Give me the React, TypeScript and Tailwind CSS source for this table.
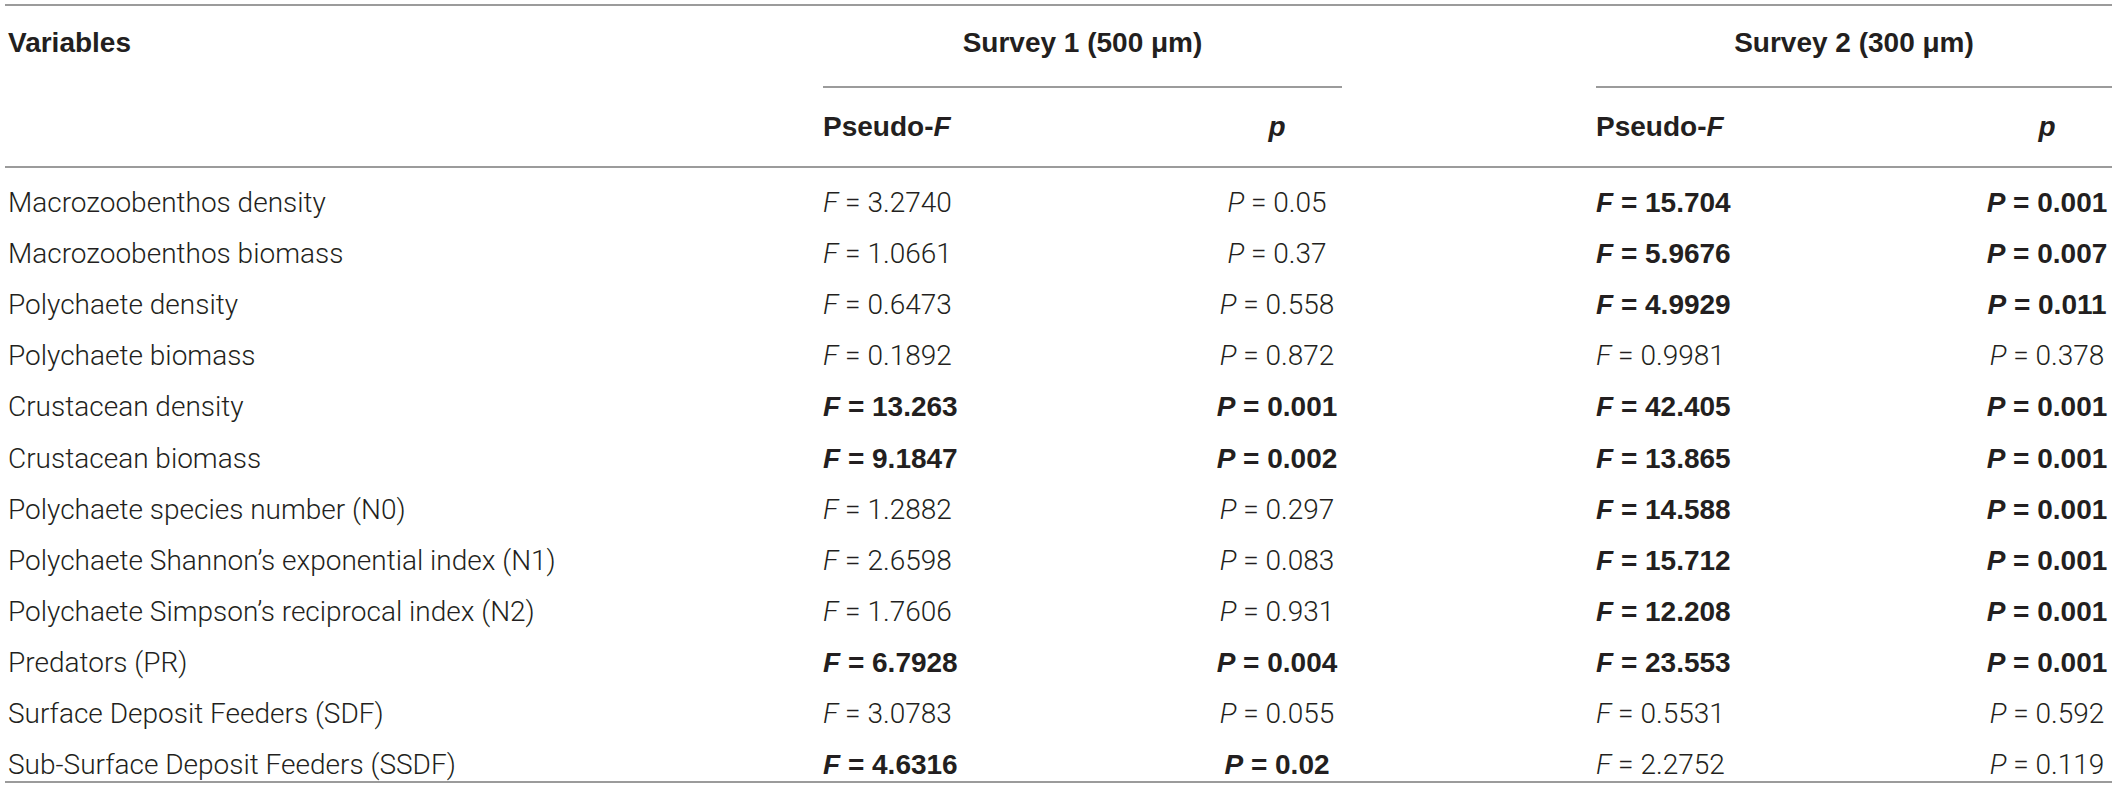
type Cell = [string, string, boolean]

type Row = { name: string; s1: Cell; s2: Cell }

const ROWS: Row[] = [
  { name: 'Macrozoobenthos density', s1: ['3.2740', '0.05', false], s2: ['15.704', '0.001', true] },
  { name: 'Macrozoobenthos biomass', s1: ['1.0661', '0.37', false], s2: ['5.9676', '0.007', true] },
  { name: 'Polychaete density', s1: ['0.6473', '0.558', false], s2: ['4.9929', '0.011', true] },
  { name: 'Polychaete biomass', s1: ['0.1892', '0.872', false], s2: ['0.9981', '0.378', false] },
  { name: 'Crustacean density', s1: ['13.263', '0.001', true], s2: ['42.405', '0.001', true] },
  { name: 'Crustacean biomass', s1: ['9.1847', '0.002', true], s2: ['13.865', '0.001', true] },
  { name: 'Polychaete species number (N0)', s1: ['1.2882', '0.297', false], s2: ['14.588', '0.001', true] },
  { name: 'Polychaete Shannon’s exponential index (N1)', s1: ['2.6598', '0.083', false], s2: ['15.712', '0.001', true] },
  { name: 'Polychaete Simpson’s reciprocal index (N2)', s1: ['1.7606', '0.931', false], s2: ['12.208', '0.001', true] },
  { name: 'Predators (PR)', s1: ['6.7928', '0.004', true], s2: ['23.553', '0.001', true] },
  { name: 'Surface Deposit Feeders (SDF)', s1: ['3.0783', '0.055', false], s2: ['0.5531', '0.592', false] },
  { name: 'Sub-Surface Deposit Feeders (SSDF)', s1: ['4.6316', '0.02', true], s2: ['2.2752', '0.119', false] },
]

// columns: variable | S1 F | S1 p | gap | S2 F | S2 p
const cols = 'grid grid-cols-[818px_389px_130px_254px_386px_130px]'
const rule = 'h-[2px] bg-[#9b9b9b]'
const light = "font-['Roboto','Liberation_Sans',sans-serif] font-light"
const bold = "font-['Liberation_Sans',Arial,sans-serif] font-bold"

export default function App() {
  return (
    <div className="bg-white w-[2118px] h-[789px] pl-[5px] pr-[6px] pt-[4px] text-[#231f20] font-['Liberation_Sans',Arial,sans-serif] text-[28px]">
      <div className={rule} />

      <div className={`${cols} h-[80px] items-center font-bold pb-[6px]`}>
        <div className="pl-[3px]">Variables</div>
        <div className="col-span-2 text-center">Survey 1 (500 μm)</div>
        <div />
        <div className="col-span-2 text-center">Survey 2 (300 μm)</div>
      </div>

      <div className={cols}>
        <div />
        <div className={`col-span-2 ${rule}`} />
        <div />
        <div className={`col-span-2 ${rule}`} />
      </div>

      <div className={`${cols} h-[78px] items-center font-bold`}>
        <div />
        <div>Pseudo-<i>F</i></div>
        <div className="text-center"><i>p</i></div>
        <div />
        <div>Pseudo-<i>F</i></div>
        <div className="text-center"><i>p</i></div>
      </div>

      <div className={rule} />

      <div>
        {ROWS.map(r => (
          <div key={r.name} className={`${cols} h-[51.1px] pt-[19px] items-center leading-none`}>
            <div className={`pl-[3px] whitespace-nowrap ${light}`}>{r.name}</div>
            <Stat letter="F" value={r.s1[0]} strong={r.s1[2]} />
            <Stat letter="P" value={r.s1[1]} strong={r.s1[2]} center />
            <div />
            <Stat letter="F" value={r.s2[0]} strong={r.s2[2]} />
            <Stat letter="P" value={r.s2[1]} strong={r.s2[2]} center />
          </div>
        ))}
      </div>

      <div className={rule} />
    </div>
  )
}

function Stat({ letter, value, strong, center }: { letter: string; value: string; strong: boolean; center?: boolean }) {
  return (
    <div className={`whitespace-nowrap ${strong ? bold : light} ${center ? 'text-center' : ''}`}>
      <i>{letter}</i> = {value}
    </div>
  )
}
